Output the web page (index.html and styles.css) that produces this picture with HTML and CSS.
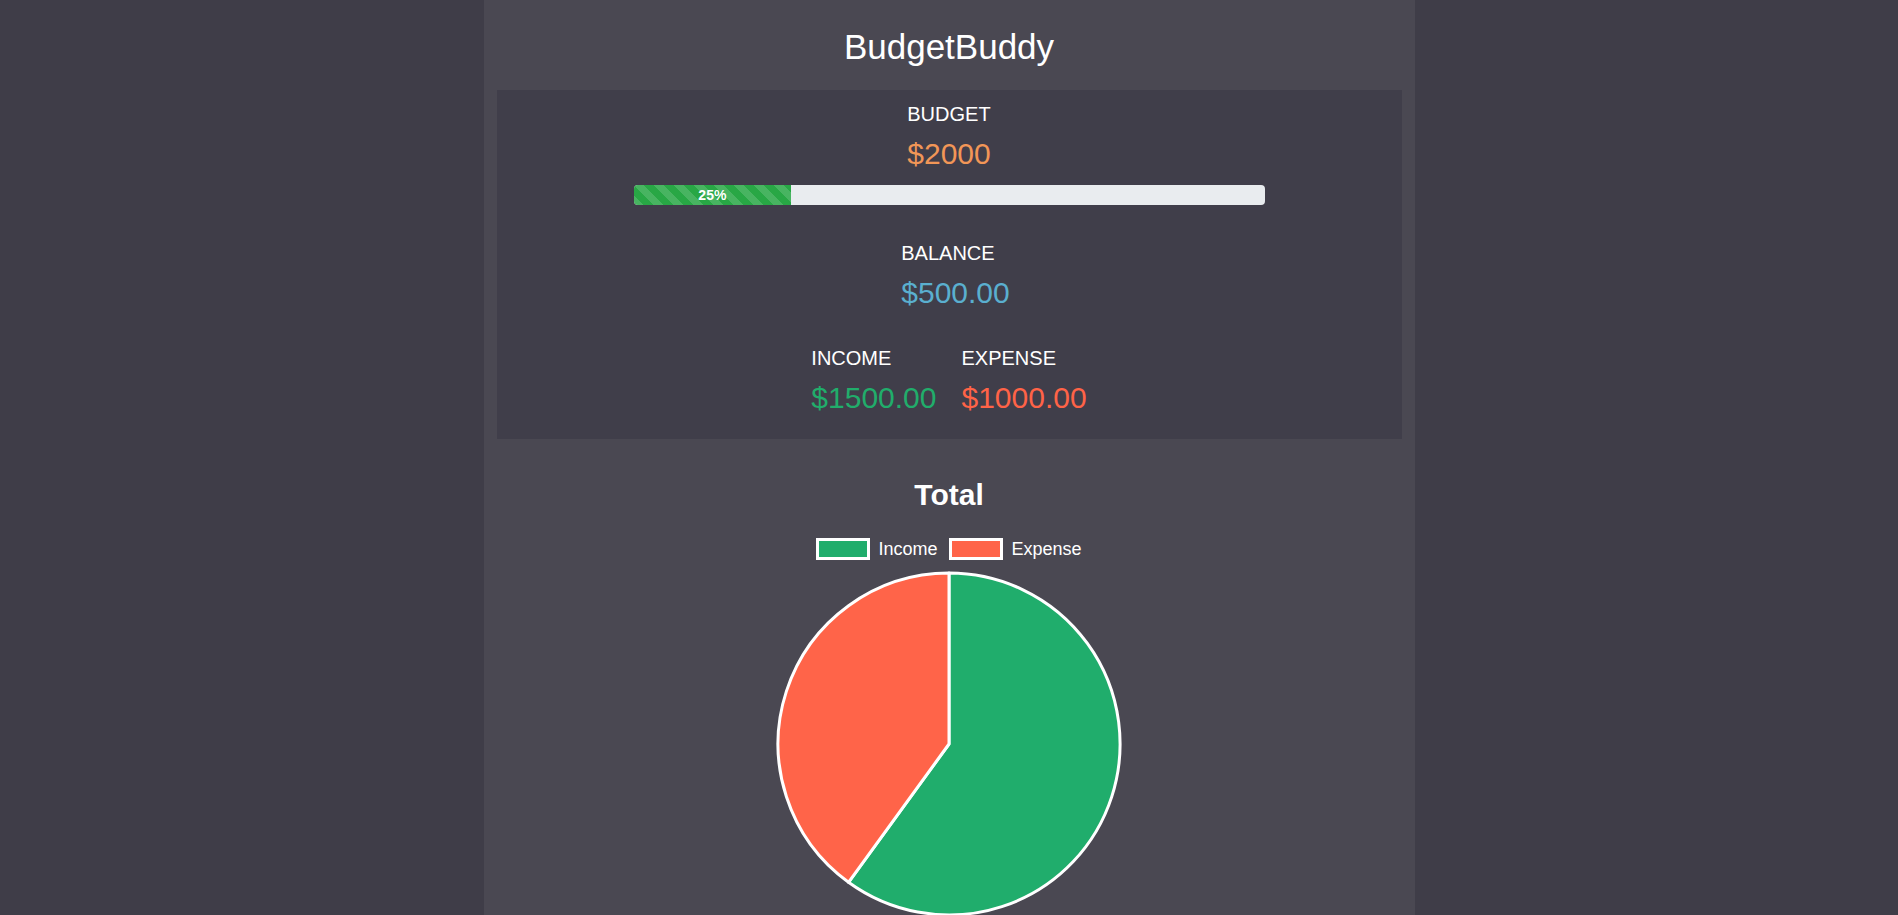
FILE: index.html
```html
<!DOCTYPE html>
<html lang="en">
<head>
<meta charset="utf-8">
<title>BudgetBuddy</title>
<link rel="stylesheet" href="styles.css">
</head>
<body>
<main class="app">
  <h1 class="title">BudgetBuddy</h1>
  <section class="summary">
    <div class="stat">
      <div class="label">BUDGET</div>
      <div class="amount amount-budget">$2000</div>
    </div>
    <div class="progress">
      <div class="progress-bar" style="width: 25%">25%</div>
    </div>
    <div class="stat stat-balance">
      <div class="label">BALANCE</div>
      <div class="amount amount-balance">$500.00</div>
    </div>
    <div class="pair">
      <div class="stat">
        <div class="label">INCOME</div>
        <div class="amount amount-income">$1500.00</div>
      </div>
      <div class="stat">
        <div class="label">EXPENSE</div>
        <div class="amount amount-expense">$1000.00</div>
      </div>
    </div>
  </section>
  <section class="chart">
    <h2 class="chart-title">Total</h2>
    <div class="legend">
      <span class="legend-item"><span class="swatch swatch-income"></span>Income</span>
      <span class="legend-item"><span class="swatch swatch-expense"></span>Expense</span>
    </div>
    <svg class="pie" width="346" height="346" viewBox="0 0 346 346">
      <path d="M173 173 L173 2 A171 171 0 1 1 72.5 311.3 Z" fill="#20ad6c" stroke="#ffffff" stroke-width="3" stroke-linejoin="round"/>
      <path d="M173 173 L72.5 311.3 A171 171 0 0 1 173 2 Z" fill="#ff6449" stroke="#ffffff" stroke-width="3" stroke-linejoin="round"/>
    </svg>
  </section>
</main>
</body>
</html>
```

FILE: styles.css
```css
html, body {
  margin: 0;
  padding: 0;
  overflow: hidden;
}
body {
  background: #3f3d48;
  font-family: "Liberation Sans", Arial, sans-serif;
  color: #ffffff;
}
.app {
  width: 931px;
  margin: 0 auto;
  min-height: 100vh;
  background: #4a4852;
  display: flex;
  flex-direction: column;
  align-items: stretch;
}
.title {
  margin: 0;
  padding: 27px 0 23px;
  font-size: 35px;
  line-height: 40px;
  font-weight: normal;
  text-align: center;
}
.summary {
  margin: 0 13px;
  background: #403e4a;
  padding: 12px 0 23px;
  display: flex;
  flex-direction: column;
  align-items: center;
}
.stat {
  display: flex;
  flex-direction: column;
  align-items: flex-start;
  gap: 10px;
}
.label {
  font-size: 20px;
  line-height: 24px;
}
.amount {
  font-size: 30px;
  line-height: 36px;
}
.amount-budget { color: #f29657; }
.amount-balance { color: #5aafcf; }
.amount-income { color: #21ad6b; }
.amount-expense { color: #ff6347; }
.progress {
  width: 631px;
  height: 20px;
  margin-top: 13px;
  background: #e9ecef;
  border-radius: 4px;
  overflow: hidden;
  display: flex;
}
.progress-bar {
  height: 100%;
  background-color: #28a745;
  background-image: linear-gradient(45deg, rgba(255,255,255,.15) 25%, transparent 25%, transparent 50%, rgba(255,255,255,.15) 50%, rgba(255,255,255,.15) 75%, transparent 75%, transparent);
  background-size: 20px 20px;
  font-size: 14px;
  font-weight: bold;
  line-height: 20px;
  text-align: center;
  color: #ffffff;
}
.stat-balance {
  margin-top: 36px;
  margin-left: 13px;
}
.pair {
  display: flex;
  gap: 25px;
  margin-top: 35px;
}
.chart {
  display: flex;
  flex-direction: column;
  align-items: center;
  padding-top: 39px;
}
.chart-title {
  margin: 0;
  font-size: 30px;
  line-height: 34px;
  font-weight: bold;
}
.legend {
  margin-top: 26px;
  display: flex;
  gap: 12px;
  font-size: 18px;
  line-height: 22px;
}
.legend-item {
  display: flex;
  align-items: center;
  gap: 8px;
}
.swatch {
  width: 48px;
  height: 16px;
  border: 3px solid #ffffff;
}
.swatch-income { background: #20ad6c; }
.swatch-expense { background: #ff6449; }
.pie {
  margin-top: 11px;
  display: block;
}
```
